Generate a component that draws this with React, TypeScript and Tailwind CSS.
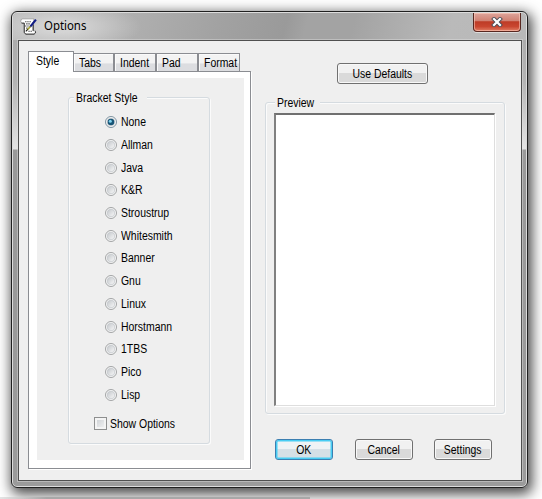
import React from "react";

const styles = [
  "None", "Allman", "Java", "K&R", "Stroustrup", "Whitesmith", "Banner",
  "Gnu", "Linux", "Horstmann", "1TBS", "Pico", "Lisp",
];

function Label({ children, center }: { children: React.ReactNode; center?: boolean }) {
  return (
    <span className={`inline-block whitespace-nowrap scale-x-[0.87] ${center ? "origin-center" : "origin-left"}`}>
      {children}
    </span>
  );
}

function Radio({ label, checked }: { label: string; checked?: boolean }) {
  return (
    <div className="flex h-[22.7px] items-center">
      <svg width="12" height="12" viewBox="0 0 12 12" className="mr-1 shrink-0">
        <circle cx="6" cy="6" r="5.5" fill="#f8f8f8" stroke={checked ? "#6f8796" : "#999b9c"} strokeWidth="0.9" />
        <circle cx="6" cy="6" r="3.8" fill="url(#dish)" stroke="#c0c4c8" strokeWidth="0.7" />
        {checked && (
          <>
            <circle cx="6" cy="6" r="3.3" fill="#185577" />
            <circle cx="5.3" cy="5.2" r="1.5" fill="#7fd2ef" />
          </>
        )}
      </svg>
      <Label>{label}</Label>
    </div>
  );
}

function Group({ title, className, labelClass, children }: { title: string; className: string; labelClass: string; children: React.ReactNode }) {
  return (
    <section className={`relative rounded-[3px] border border-[#d5dbe0] shadow-[inset_1px_1px_0_#fbfbfb,1px_1px_0_#fbfbfb] ${className}`}>
      <span className={`absolute -top-[7px] h-[14px] bg-[#efefef] pl-[2px] leading-[14px] ${labelClass}`}>
        <Label>{title}</Label>
      </span>
      {children}
    </section>
  );
}

function Button({ label, className, primary }: { label: string; className: string; primary?: boolean }) {
  return (
    <button
      className={`flex h-[21px] items-center justify-center rounded-[3px] border bg-linear-to-b from-50% to-50% ${
        primary
          ? "border-[#3c7fb1] from-[#eef3f5] to-[#d5e0e6] shadow-[inset_0_0_0_1.5px_#48cdf3]"
          : "border-[#707070] from-[#f1f1f1] to-[#dadada] shadow-[inset_0_0_0_1px_#f8f8f8]"
      } ${className}`}
    >
      <Label center>{label}</Label>
    </button>
  );
}

function Tab({ label, className }: { label: string; className: string }) {
  return (
    <div className={`h-[18px] border border-b-0 border-[#8b8d92] bg-linear-to-b from-[#f3f3f3] from-50% to-[#dcdde0] to-60% leading-[18px] shadow-[inset_1px_1px_0_#fafafa] ${className}`}>
      <Label>{label}</Label>
    </div>
  );
}

function ScriptIcon() {
  return (
    <svg width="17" height="17" viewBox="0 0 16 16" className="shrink-0">
      <path d="M1 1.5 2.5.8H13V3l-1 1v8h2.5v2l-1 1.2H5.5L4 14V5H2L.8 3.5Z" fill="#fff" stroke="#888" strokeWidth="0.6" />
      <path d="M1.5 4.8H4v8.7l1.3 1.7h8l1.2-1.2v-1.5M12.5 6v6" fill="none" stroke="#222" strokeWidth="0.8" />
      <path d="M5 3.5h5M6 5.5h4M5 7.5h3M6 9.5h2M8 12.5h4" stroke="#111" strokeDasharray="1 1" />
      <path d="M15 1.5 9.5 8.3" stroke="#101c86" strokeWidth="2" />
      <path d="m9.8 8-3 3.2" stroke="#a19e2c" strokeWidth="1.5" />
      <path d="m7.2 10.8-1.7 1.7" stroke="#111" />
    </svg>
  );
}

export default function App() {
  return (
    <div className="relative h-[499px] w-[542px] overflow-hidden bg-white pt-[11px] pl-[11px] font-['Liberation_Sans',Arial,sans-serif] text-[12px] text-black">
      <svg className="absolute size-0">
        <defs>
          <linearGradient id="dish" x1="0" y1="0" x2="1" y2="1">
            <stop stopColor="#c2c6ca" />
            <stop offset="1" stopColor="#fafafa" />
          </linearGradient>
        </defs>
      </svg>
      <main className="relative h-[477px] w-[517px] rounded-[6px] border border-[#202020] bg-[linear-gradient(to_bottom,#bcbcbc_0,#acacac_28px,#b4b4b4_70px,#e4e4e4_137px,#999_138px,#9b9b9b_100%)] shadow-[inset_0_0_0_1px_#dcdcdc,2px_4px_13px_2px_rgba(0,0,0,0.72)]">
        <header className="mx-px mt-px flex h-[27px] rounded-t-[5px] bg-[radial-gradient(ellipse_80px_26px_at_48px_14px,#d4d4d4_20%,transparent),linear-gradient(105deg,#b8b8b8_0%,#aeaeae_25%,#a2a2a2_40%,#9a9a9a_53%,#a3a3a3_57%,#a3a3a3_66%,#bababa_85%,#b8b8b8_100%)] pl-[7px]">
          <div className="flex h-[26px] items-center">
            <ScriptIcon />
            <span className="ml-[7px] inline-block origin-left scale-x-[0.95] font-['Noto_Sans',sans-serif] text-[12px]">Options</span>
          </div>
          <button className="mr-[5px] ml-auto flex h-[19px] w-[48px] items-center justify-center rounded-b-[4px] border border-t-0 border-[#582720] bg-[linear-gradient(#dda49b,#d08071_45%,#bd3b26_48%,#c94630_75%,#e17e64)] shadow-[inset_0_0_0_1px_rgba(255,210,195,0.55),0_1px_0_#ddd]">
            <svg width="12" height="10" viewBox="0 0 12 10">
              <path d="m3 2 6 6M9 2 3 8" stroke="#4d4e58" strokeWidth="4" strokeLinecap="square" />
              <path d="m3 2 6 6M9 2 3 8" stroke="#fff" strokeWidth="2.2" strokeLinecap="square" />
            </svg>
          </button>
        </header>
        <div className="ml-[6px] flex h-[441px] w-[504px] border border-[#505050] bg-[#efefef] pt-[10px] pl-[9px] shadow-[0_0_0_1px_rgba(230,230,230,0.4)]">
          <div className="w-[223px]">
            <nav className="flex h-[20px] items-end">
              <div className="relative z-10 -mb-px h-[21px] w-[46px] self-start border border-b-0 border-[#8b8d92] bg-white pl-[7px] leading-[18px]">
                <Label>Style</Label>
              </div>
              <Tab label="Tabs" className="w-[40px] border-l-0 pl-[5px]" />
              <Tab label="Indent" className="w-[42px] pl-[5px]" />
              <Tab label="Pad" className="w-[42px] pl-[5px]" />
              <Tab label="Format" className="w-[42px] pl-[5px]" />
            </nav>
            <div className="h-[398px] w-[223px] border border-[#8b8d92] bg-white pt-[6px] pl-[8px] shadow-[1px_1px_0_#fff]">
              <div className="h-[382px] w-[207px] bg-[#efefef] pt-[19px] pl-[31px]">
                <Group title="Bracket Style" labelClass="left-[5px]" className="h-[347px] w-[142px]">
                  <div className="pt-[13px] pl-[36px]">
                    {styles.map((s, i) => <Radio key={s} label={s} checked={i === 0} />)}
                  </div>
                  <div className="mt-[9px] ml-[25px] flex items-center">
                    <span className="mr-[3px] size-[13px] border border-[#8e8f8f] bg-linear-to-br from-[#c9cdd1] to-[#f6f6f6] shadow-[inset_0_0_0_2px_#f4f4f4]" />
                    <Label>Show Options</Label>
                  </div>
                </Group>
              </div>
            </div>
          </div>
          <div className="ml-[14px] w-[240px] pt-[12px]">
            <Button label="Use Defaults" className="ml-[72px] w-[91px]" />
            <Group title="Preview" labelClass="left-[9px]" className="mt-[18px] h-[312px] w-[240px] pt-[10px] pl-[8px]">
              <div className="h-[293px] w-[221px] border-t-2 border-r border-b border-l-2 border-t-[#707070] border-r-[#dedede] border-b-[#dedede] border-l-[#808080] bg-white shadow-[1px_1px_0_#fff]" />
            </Group>
            <div className="mt-[25px] ml-[10px] flex">
              <Button label="OK" primary className="w-[58px]" />
              <Button label="Cancel" className="ml-[22px] w-[58px]" />
              <Button label="Settings" className="ml-[21px] w-[58px]" />
            </div>
          </div>
        </div>
      </main>
      <div className="absolute bottom-0 left-0 h-[2px] w-[310px] bg-linear-to-r from-[#e4e4e4] via-[#a8a8a8] via-15% to-[#a8a8a8]" />
    </div>
  );
}
